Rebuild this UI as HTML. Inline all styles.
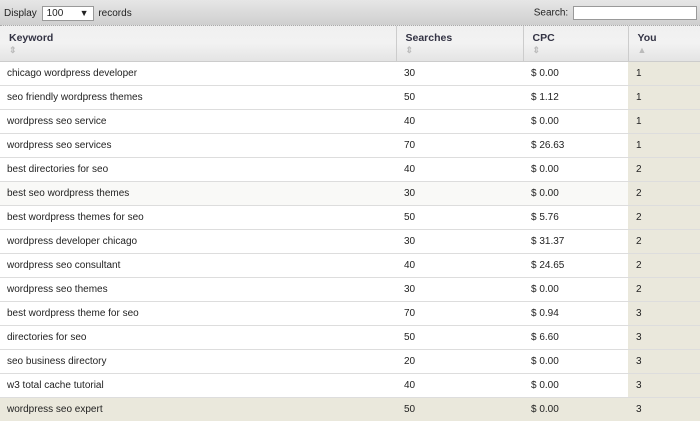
<!DOCTYPE html>
<html><head><style>
body{margin:0;width:700px;height:421px;overflow:hidden;background:#fff;font-family:"Liberation Sans",Tahoma,sans-serif;font-size:10px;color:#222;}
.top{height:25px;background:linear-gradient(#e6e6e6,#cfcfcf);border-bottom:1px dotted #aaa;position:relative;}
.top .l{position:absolute;left:4px;top:6px;}
.sel{display:inline-block;width:46px;height:13px;border:1px solid #999;background:#fff;vertical-align:middle;position:relative;margin:0 2px;padding-left:4px;line-height:13px;box-sizing:content-box}
.sel span{position:absolute;right:4px;top:0;font-size:9px}
.top .r{position:absolute;right:3px;top:6px;}
.top .r input{width:118px;height:10px;border:1px solid #999;vertical-align:middle;margin-left:2px;}
table{border-collapse:collapse;width:700px;table-layout:fixed;}
th{height:35px;background:linear-gradient(#f0f0f0 0,#f2f2f2 50%,#e4e4e4 100%);text-align:left;vertical-align:top;padding:6px 0 0 9px;font-size:10.5px;color:#334;border-left:1px solid #ccc;border-bottom:1px solid #ccc;box-sizing:border-box;}
th:first-child{border-left:none}
th i{display:block;font-style:normal;color:#bbb;font-size:9px;margin-top:1px;line-height:10px}
td{height:24px;padding:1px 0 0 8px;border-bottom:1px solid #ddd;box-sizing:border-box;white-space:nowrap}
td:first-child{padding-left:7px}
td.y{background:#eae8dc;}
tr.g td{background:#f9f9f7}
tr.g td.y{background:#eae8dc}
tr.h td{background:#eae8dc;border-bottom:none}
</style></head><body>
<div class="top"><div class="l">Display <span class="sel">100<span>▼</span></span> records</div>
<div class="r">Search: <input></div></div>
<table>
<colgroup><col style="width:396px"><col style="width:127px"><col style="width:105px"><col style="width:72px"></colgroup>
<tr><th>Keyword<i>⇕</i></th><th>Searches<i>⇕</i></th><th>CPC<i>⇕</i></th><th>You<i>▲</i></th></tr>
<tr><td>chicago wordpress developer</td><td>30</td><td>$ 0.00</td><td class="y">1</td></tr>
<tr><td>seo friendly wordpress themes</td><td>50</td><td>$ 1.12</td><td class="y">1</td></tr>
<tr><td>wordpress seo service</td><td>40</td><td>$ 0.00</td><td class="y">1</td></tr>
<tr><td>wordpress seo services</td><td>70</td><td>$ 26.63</td><td class="y">1</td></tr>
<tr><td>best directories for seo</td><td>40</td><td>$ 0.00</td><td class="y">2</td></tr>
<tr class="g"><td>best seo wordpress themes</td><td>30</td><td>$ 0.00</td><td class="y">2</td></tr>
<tr><td>best wordpress themes for seo</td><td>50</td><td>$ 5.76</td><td class="y">2</td></tr>
<tr><td>wordpress developer chicago</td><td>30</td><td>$ 31.37</td><td class="y">2</td></tr>
<tr><td>wordpress seo consultant</td><td>40</td><td>$ 24.65</td><td class="y">2</td></tr>
<tr><td>wordpress seo themes</td><td>30</td><td>$ 0.00</td><td class="y">2</td></tr>
<tr><td>best wordpress theme for seo</td><td>70</td><td>$ 0.94</td><td class="y">3</td></tr>
<tr><td>directories for seo</td><td>50</td><td>$ 6.60</td><td class="y">3</td></tr>
<tr><td>seo business directory</td><td>20</td><td>$ 0.00</td><td class="y">3</td></tr>
<tr><td>w3 total cache tutorial</td><td>40</td><td>$ 0.00</td><td class="y">3</td></tr>
<tr class="h"><td>wordpress seo expert</td><td>50</td><td>$ 0.00</td><td class="y">3</td></tr>
</table>
</body></html>
